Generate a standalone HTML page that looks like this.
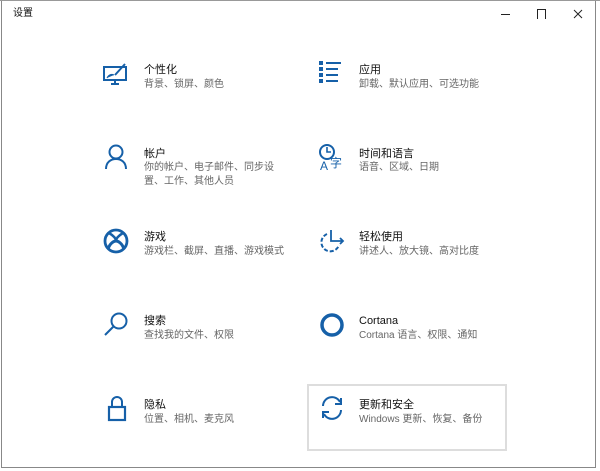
<!DOCTYPE html>
<html><head><meta charset="utf-8"><style>
body{margin:0;width:600px;height:471px;background:#fff;position:relative;overflow:hidden;font-family:"Liberation Sans","Noto Sans CJK SC",sans-serif}
.win{position:absolute;left:1px;top:0;width:595px;height:468px;border:1px solid #888;border-top:none;box-sizing:border-box}
.t{position:absolute;font-size:11px;color:#111;line-height:14px;white-space:nowrap}
.s{position:absolute;font-size:10px;color:#666;line-height:13px;white-space:nowrap}
svg{position:absolute}
</style></head><body>
<div class="win"></div>
<div style="position:absolute;left:0;top:0;width:600px;height:1px;background:#999"></div>
<div class="t" style="left:13px;top:7px;font-size:10px">设置</div>
<div style="position:absolute;left:501px;top:14px;width:9px;height:1px;background:#222"></div>
<div style="position:absolute;left:537px;top:9px;width:7px;height:9px;border:1px solid #222;border-bottom:none"></div>
<svg style="left:573px;top:9px" width="10" height="10"><path d="M1 1L9 9M9 1L1 9" stroke="#222" stroke-width="1"/></svg>
<div style="position:absolute;left:307px;top:384px;width:200px;height:67px;border:2px solid #ddd;box-sizing:border-box"></div>

<svg style="left:103px;top:62px" width="26" height="24"><rect x="1" y="5" width="22" height="13" fill="none" stroke="#1660a8" stroke-width="2"/><path d="M8 22h8M12 18v4M22 2L12 13" stroke="#1660a8" stroke-width="2"/><path d="M4 16c2-4 5-4 7-3" fill="#1660a8" stroke="#1660a8"/></svg>
<div class="t" style="left:144px;top:63px">个性化</div>
<div class="s" style="left:144px;top:78px">背景、锁屏、颜色</div>

<svg style="left:318px;top:60px" width="26" height="24"><g fill="#1660a8"><rect x="1" y="1" width="4" height="4"/><rect x="1" y="7" width="4" height="4"/><rect x="1" y="13" width="4" height="4"/><rect x="1" y="19" width="4" height="4"/><rect x="8" y="2" width="15" height="2"/><rect x="8" y="8" width="12" height="2"/><rect x="8" y="14" width="12" height="2"/><rect x="8" y="20" width="12" height="2"/></g></svg>
<div class="t" style="left:359px;top:63px">应用</div>
<div class="s" style="left:359px;top:78px">卸载、默认应用、可选功能</div>

<svg style="left:104px;top:144px" width="24" height="26"><circle cx="12" cy="8" r="6.5" fill="none" stroke="#1660a8" stroke-width="2"/><path d="M2 25c0-7 5-10 10-10s10 3 10 10" fill="none" stroke="#1660a8" stroke-width="2"/></svg>
<div class="t" style="left:144px;top:147px">帐户</div>
<div class="s" style="left:144px;top:161px">你的帐户、电子邮件、同步设</div>
<div class="s" style="left:144px;top:175px">置、工作、其他人员</div>

<svg style="left:318px;top:143px" width="28" height="28"><circle cx="9" cy="9" r="7" fill="none" stroke="#1660a8" stroke-width="2"/><path d="M9 4v5h4" stroke="#1660a8" stroke-width="1.6" fill="none"/><text x="2" y="27" font-size="12" fill="#1660a8" font-family="Liberation Sans">A</text><text x="12" y="24" font-size="12" fill="#1660a8" font-family="Noto Sans CJK SC">字</text></svg>
<div class="t" style="left:359px;top:147px">时间和语言</div>
<div class="s" style="left:359px;top:161px">语音、区域、日期</div>

<svg style="left:103px;top:228px" width="26" height="26"><circle cx="13" cy="13" r="11" fill="none" stroke="#1660a8" stroke-width="2.8"/><path d="M6 5C11 8 13 11 13 13C13 11 15 8 20 5" fill="none" stroke="#1660a8" stroke-width="2.5"/><path d="M5 21C7 15 11 13 13 13C15 13 19 15 21 21" fill="none" stroke="#1660a8" stroke-width="3"/></svg>
<div class="t" style="left:144px;top:230px">游戏</div>
<div class="s" style="left:144px;top:245px">游戏栏、截屏、直播、游戏模式</div>

<svg style="left:319px;top:229px" width="26" height="26"><path d="M8 5A9 9 0 1 0 20 16" fill="none" stroke="#1660a8" stroke-width="2" stroke-dasharray="4 2"/><path d="M12 1v11h12M21 9l3 3-3 3" fill="none" stroke="#1660a8" stroke-width="1.8"/></svg>
<div class="t" style="left:359px;top:230px">轻松使用</div>
<div class="s" style="left:359px;top:245px">讲述人、放大镜、高对比度</div>

<svg style="left:103px;top:311px" width="26" height="26"><circle cx="16" cy="10" r="7.5" fill="none" stroke="#1660a8" stroke-width="2"/><path d="M11 15L2 24" stroke="#1660a8" stroke-width="2"/></svg>
<div class="t" style="left:144px;top:314px">搜索</div>
<div class="s" style="left:144px;top:329px">查找我的文件、权限</div>

<svg style="left:319px;top:312px" width="26" height="26"><circle cx="13" cy="13" r="10" fill="none" stroke="#1660a8" stroke-width="3.5"/></svg>
<div class="t" style="left:359px;top:314px">Cortana</div>
<div class="s" style="left:359px;top:329px">Cortana 语言、权限、通知</div>

<svg style="left:107px;top:396px" width="20" height="26"><path d="M5 11V6a5 5 0 0 1 10 0v5" fill="none" stroke="#1660a8" stroke-width="2"/><rect x="2" y="11" width="16" height="13" fill="none" stroke="#1660a8" stroke-width="2.2"/></svg>
<div class="t" style="left:144px;top:398px">隐私</div>
<div class="s" style="left:144px;top:413px">位置、相机、麦克风</div>

<svg style="left:319px;top:395px" width="26" height="26"><path d="M4 11A9 9 0 0 1 21 7M22 15A9 9 0 0 1 5 19" fill="none" stroke="#1660a8" stroke-width="2"/><path d="M22 3v6h-6M4 23v-6h6" fill="none" stroke="#1660a8" stroke-width="2"/></svg>
<div class="t" style="left:359px;top:398px">更新和安全</div>
<div class="s" style="left:359px;top:413px">Windows 更新、恢复、备份</div>
</body></html>
